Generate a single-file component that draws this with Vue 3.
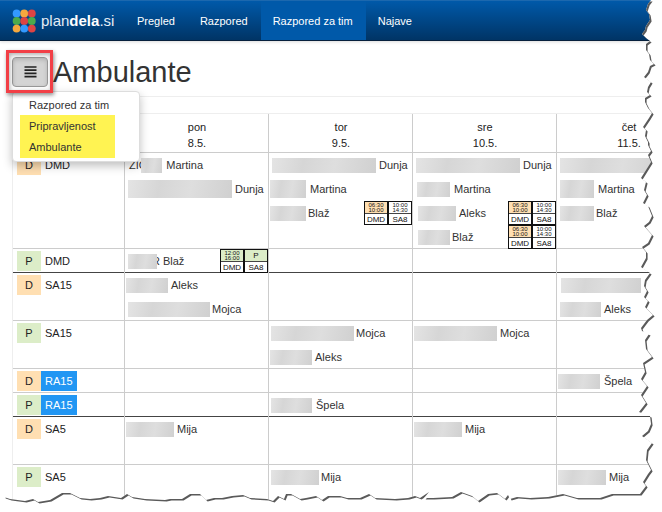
<script setup>
import { ref } from "vue";

const menu_open = ref(true);
const active = ref("Razpored za tim");

const nav_items = ["Pregled", "Razpored", "Razpored za tim", "Najave"];
const menu_items = ["Razpored za tim", "Pripravljenost", "Ambulante"];

const dots = ["#3399ff", "#f5a83e", "#dd4444", "#4caa4c", "#dd4444", "#4caa4c", "#f5a83e", "#3399ff", "#dd4444"];

const days = [
	{ name: "pon", date: "8.5." },
	{ name: "tor", date: "9.5." },
	{ name: "sre", date: "10.5." },
	{ name: "čet", date: "11.5." },
];

// x = indent of the masked surname, w = its width, gap = space before the first name
const p = (name, x, w, gap, extra = {}) => ({ name, x, w, gap, ...extra });

const morning = [
	{ kind: "d", lines: ["06:30", "10:00"], place: "DMD" },
	{ kind: "", lines: ["10:00", "14:30"], place: "SA8" },
];
const afternoon = [
	{ kind: "p", lines: ["12:00", "16:00"], place: "DMD" },
	{ kind: "p", lines: ["P"], place: "SA8" },
];

const rows = [
	{
		shift: "D", place: "DMD", slots: 4,
		cells: [
			[p("Martina", 4, 21, 4, { lead: "ZIG" }), p("Dunja", 3, 104, 3, { tall: true })],
			[p("Dunja", 3, 104, 3), p("Martina", 1, 36, 4, { tall: true }), p("Blaž", 1, 36, 2, { split: morning })],
			[p("Dunja", 3, 104, 3), p("Martina", 4, 33, 4), p("Aleks", 5, 38, 3, { split: morning }), p("Blaž", 5, 32, 2, { split: morning })],
			[p("", 3, 104, 3), p("Martina", 3, 34, 4, { tall: true }), p("Blaž", 3, 34, 2)],
		],
	},
	{
		shift: "P", place: "DMD", slots: 1, last: true,
		cells: [[p("Blaž", 3, 29, 3, { tail: "R", split: afternoon })], [], [], []],
	},
	{
		shift: "D", place: "SA15", slots: 2,
		cells: [
			[p("Aleks", 1, 42, 3), p("Mojca", 3, 82, 2)],
			[],
			[],
			[p("", 4, 80, 3), p("Aleks", 3, 41, 3)],
		],
	},
	{
		shift: "P", place: "SA15", slots: 2,
		cells: [[], [p("Mojca", 2, 83, 2), p("Aleks", 1, 42, 3)], [p("Mojca", 1, 83, 3)], []],
	},
	{ shift: "D", place: "RA15", blue: true, slots: 1, cells: [[], [], [], [p("Špela", 1, 42, 4)]] },
	{ shift: "P", place: "RA15", blue: true, slots: 1, last: true, cells: [[], [p("Špela", 2, 41, 4)], [], []] },
	{ shift: "D", place: "SA5", slots: 2, cells: [[p("Mija", 1, 48, 3)], [], [p("Mija", 1, 48, 3)], []] },
	{ shift: "P", place: "SA5", slots: 2, cells: [[], [p("Mija", 2, 48, 2)], [], [p("Mija", 1, 48, 3)]] },
];

// ragged paper edge, right side going down and then the bottom going left
const edge = "651,0 648,4 646,10 649,14 650,20 646,26 645,30 642,34 646,38 650,41 646,44 646,50 649,54 650,60 654,64 650,66 648,72 644,77 651,82 648,87 647,92 650,95 645,98 645,102 648,108 652,113 649,118 643,127 646,130 645,136 648,142 648,145 651,151 648,155 651,162 646,170 641,178 646,182 644,190 647,195 643,203 648,206 652,216 649,222 644,226 652,235 648,243 642,247 646,252 646,258 641,267 650,273 645,280 644,286 647,291 644,297 648,301 645,307 653,315 647,320 641,328 642,331 649,334 645,340 646,349 652,357 643,363 645,372 641,379 647,386 641,395 646,403 639,412 650,416 651,424 648,431 642,436 652,443 647,450 646,460 651,470 648,474 643,482 646,486 640,494"
	+ " 612,494 600,498 577,498 563,494 548,497 530,498 517,497 510,499 508,495 505,499 497,493 488,494 478,501 472,496 461,492 452,497 433,498 424,498 429,492 420,498 415,496 408,498 395,499 375,498 369,494 360,498 347,498 340,496 328,496 322,500 316,496 306,498 300,499 291,494 286,494 284,499 278,496 273,501 267,499 250,498 243,495 232,496 222,498 214,498 206,500 200,494 190,494 182,499 170,499 165,500 145,499 132,497 127,494 121,498 108,496 100,498 90,499 80,498 70,493 62,493 50,500 38,502 33,499 25,501 10,499 4,497";
const sheet = "4,0 " + edge;
const outside = edge + " 0,497 0,512 662,512 662,0";
</script>

<template>
	<div class="page">
		<nav class="navbar">
			<a href="#" class="brand">
				<svg class="logo" viewBox="0 0 24 24" aria-hidden="true">
					<circle v-for="(color, i) in dots" :key="i" :cx="4.6 + (i % 3) * 7.6" :cy="4.4 + Math.floor(i / 3) * 7.6" r="3.9" :fill="color" />
				</svg>
				<span>plan<b>dela</b>.si</span>
			</a>
			<a v-for="item in nav_items" :key="item" href="#" class="nav_link" :class="{ active: item === active }" @click.prevent="active = item">{{ item }}</a>
		</nav>

		<main class="content">
			<header class="page_header">
				<div class="menu_wrapper">
					<button type="button" class="menu_button" aria-label="Meni" @click="menu_open = !menu_open">
						<svg viewBox="0 0 13 12" width="13" height="12" aria-hidden="true">
							<path d="M0.5 1h12M0.5 4.2h12M0.5 7.4h12M0.5 10.6h12" stroke="#222" stroke-width="1.7" />
						</svg>
					</button>
					<div v-if="menu_open" class="dropdown">
						<a v-for="item in menu_items" :key="item" href="#">{{ item }}</a>
					</div>
					<div class="red_frame"></div>
				</div>
				<h1>Ambulante</h1>
			</header>

			<div class="table_scroll">
				<table>
					<thead>
						<tr>
							<th class="place_col"></th>
							<th v-for="day in days" :key="day.name">{{ day.name }}<br>{{ day.date }}</th>
						</tr>
					</thead>
					<tbody>
						<tr v-for="(row, r) in rows" :key="r" :class="{ last: row.last }" :style="{ height: row.slots * 24 + 'px' }">
							<td>
								<div class="place">
									<span class="shift" :class="row.shift.toLowerCase()">{{ row.shift }}</span>
									<span class="room" :class="{ blue: row.blue }">{{ row.place }}</span>
								</div>
							</td>
							<td v-for="(people, c) in row.cells" :key="c">
								<div v-for="(person, n) in people" :key="n" class="person">
									<span class="surname" :style="{ marginLeft: person.x + 'px', marginRight: person.gap + 'px' }">
										<span v-if="person.lead" class="lead">{{ person.lead }}</span>
										<span class="mask" :class="{ tall: person.tall }" :style="{ width: person.w + 'px' }"></span>
										<span v-if="person.tail" class="tail">{{ person.tail }}</span>
									</span>
									<span>{{ person.name }}</span>
									<span v-if="person.split" class="split">
										<span v-for="(part, s) in person.split" :key="s" class="part">
											<span class="hours" :class="[part.kind, { single: part.lines.length === 1 }]">
												<span v-for="line in part.lines" :key="line">{{ line }}</span>
											</span>
											<span class="where">{{ part.place }}</span>
										</span>
									</span>
								</div>
							</td>
						</tr>
					</tbody>
				</table>
			</div>
		</main>

		<svg class="torn" viewBox="0 0 662 512" preserveAspectRatio="none" aria-hidden="true">
			<defs>
				<clipPath id="outside"><polygon :points="outside" /></clipPath>
				<filter id="soft"><feGaussianBlur stdDeviation="0.7" /></filter>
			</defs>
			<polygon :points="outside" fill="#fff" />
			<g clip-path="url(#outside)">
				<polygon :points="sheet" fill="#5a5a5a" transform="translate(1.6 1.4)" filter="url(#soft)" />
			</g>
		</svg>
	</div>
</template>

<style>
body {
	margin: 0;
	background: #fff;
}
</style>

<style scoped>
.page {
	position: relative;
	height: 100vh;
	overflow: hidden;
	font-family: "Liberation Sans", Arial, sans-serif;
	font-size: 11px;
	line-height: 16px;
	color: #333;
}

.page * {
	box-sizing: border-box;
}

a {
	text-decoration: none;
	color: inherit;
}

.navbar {
	display: flex;
	height: 41px;
	padding-left: 12px;
	background: linear-gradient(#0059a9, #003465);
	border-top: 1px solid #1c68ae;
	border-bottom: 1px solid #06203c;
	box-shadow: 0 1px 3px rgba(0, 0, 0, 0.15);
	color: #fff;
}

.brand {
	display: flex;
	align-items: center;
	gap: 5px;
	width: 113px;
	font-size: 15px;
	color: #e4edf6;
}

.brand b {
	color: #fff;
}

.logo {
	width: 24px;
	height: 24px;
}

.nav_link {
	display: flex;
	align-items: center;
	padding: 0 13px 0 12px;
}

.nav_link.active {
	background: #0059a9;
}

.content {
	padding-left: 12px;
}

.page_header {
	display: flex;
	align-items: center;
	gap: 5px;
	height: 56px;
	padding-top: 6px;
	border-bottom: 1px solid #eee;
}

.menu_wrapper {
	position: relative;
}

.menu_button {
	display: flex;
	align-items: center;
	justify-content: center;
	width: 36px;
	height: 30px;
	padding: 0;
	border: 1px solid #999;
	border-radius: 4px;
	background: #d4d4d4;
	box-shadow: inset 0 2px 4px rgba(0, 0, 0, 0.15);
}

.red_frame {
	position: absolute;
	z-index: 3;
	inset: -7px -5px -6px -6px;
	border: 3px solid #f23f46;
	box-shadow: 1px 2px 4px rgba(0, 0, 0, 0.45), inset 1px 2px 4px rgba(0, 0, 0, 0.3);
	pointer-events: none;
}

.dropdown {
	position: absolute;
	z-index: 2;
	top: 34px;
	left: 0;
	width: 128px;
	padding: 3px 0;
	border: 1px solid #ddd;
	border-radius: 4px;
	background: #fff;
	box-shadow: 0 4px 10px rgba(0, 0, 0, 0.25);
}

.dropdown::before {
	content: "";
	position: absolute;
	top: 23px;
	left: 7px;
	width: 95px;
	height: 43px;
	background: #fff352;
}

.dropdown a {
	position: relative;
	display: block;
	padding-left: 16px;
	line-height: 21px;
}

h1 {
	margin: 0;
	font-size: 29px;
	line-height: 32px;
	font-weight: normal;
}

.table_scroll {
	margin-top: 16px;
	overflow: hidden;
}

table {
	table-layout: fixed;
	width: 689px;
	border-collapse: separate;
	border-spacing: 0;
	border-top: 1px solid #eee;
	border-left: 1px solid #eee;
}

th {
	width: 144px;
	height: 39px;
	padding: 3px 0 0;
	font-weight: normal;
	color: #222;
	box-shadow: inset -1px -1px 0 #ccc;
}

.place_col {
	width: 112px;
}

td {
	padding: 0;
	vertical-align: top;
	box-shadow: inset -1px -1px 0 #ccc;
}

.last td {
	box-shadow: inset -1px 0 0 #ccc, inset 0 -1px 0 #444;
}

.place {
	display: flex;
	align-items: center;
	height: 24px;
	padding-left: 4px;
	color: #222;
}

.shift {
	width: 24px;
	text-align: center;
	line-height: 20px;
}

.d {
	background: #ffdfb2;
}

.p {
	background: #dcedc8;
}

.room {
	padding: 0 4px;
	line-height: 20px;
}

.room.blue {
	background: #2196f3;
	color: #fff;
}

.person {
	display: flex;
	align-items: center;
	height: 24px;
}

.surname {
	display: flex;
	align-items: center;
}

/* the mask lies over the end or the start of the surname */
.lead {
	margin-right: -6px;
}

.tail {
	margin-left: -5px;
}

.mask {
	position: relative;
	z-index: 1;
	height: 15px;
	background: linear-gradient(100deg, #e4e4e4, #d6d6d6 30%, #dedede 60%, #d0d0d0);
}

.mask.tall {
	height: 18px;
}

.split {
	display: flex;
	margin-left: auto;
	margin-right: 1px;
}

.part {
	width: 24px;
	height: 24px;
	border: 1px solid #111;
	color: #111;
	text-align: center;
}

.hours {
	display: flex;
	flex-direction: column;
	justify-content: center;
	height: 12px;
	border-bottom: 1px solid #444;
	font-size: 6px;
	line-height: 5px;
}

.hours.single {
	font-size: 8px;
	line-height: 10px;
}

.where {
	display: block;
	font-size: 8px;
	line-height: 11px;
}

.torn {
	position: absolute;
	z-index: 5;
	top: 0;
	left: 0;
	width: 100%;
	height: 100%;
	pointer-events: none;
}
</style>
